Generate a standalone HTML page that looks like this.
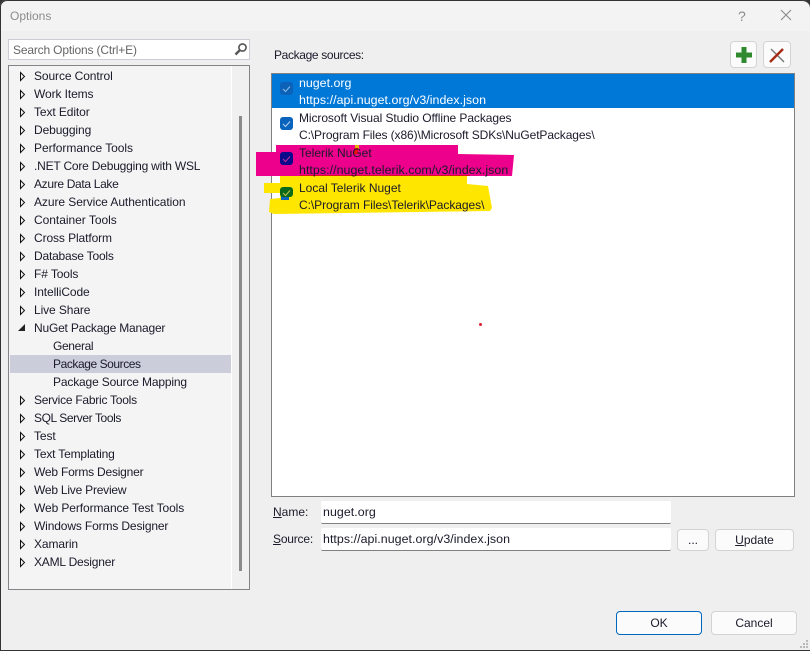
<!DOCTYPE html>
<html><head><meta charset="utf-8"><style>
html,body{margin:0;padding:0;width:810px;height:651px;overflow:hidden;background:#fff}
*{box-sizing:border-box}
#d{position:absolute;left:0;top:0;width:810px;height:651px;background:#efefef;font:12px "Liberation Sans",sans-serif;color:#1a1a2a;overflow:hidden}
.a{position:absolute;white-space:nowrap}
.r{position:absolute;left:34px;height:18px;line-height:18px;white-space:nowrap;letter-spacing:-.1px}
.b{position:absolute;background:#fbfbfb;border:1px solid #d3d3d3;border-radius:4px;text-align:center}
.in{position:absolute;background:#fff;border-bottom:1px solid #808080;border-radius:2px;padding-left:2px;height:23px;line-height:22px;font-size:12.4px;letter-spacing:.05px}
.c{position:absolute;left:280px;width:13px;height:13px;border-radius:3px;background:#0a63bd}
.l{position:absolute;left:299px;white-space:nowrap;height:17px;line-height:17px}
u{text-underline-offset:1px}
</style></head><body><div id="d">
<div class="a" style="left:0;top:0;width:810px;height:31px;background:#f3f3f3"></div>
<div class="a" style="left:10px;top:8px;color:#8c8c8c;line-height:16px">Options</div>
<div class="a" style="left:738px;top:8px;color:#8c8c8c;font-size:14px;line-height:16px">?</div>
<svg class="a" style="left:780px;top:9px" width="12" height="12"><path d="M1 1L11 11M11 1L1 11" stroke="#8a8a8a" stroke-width="1.1"/></svg>

<div class="a" style="left:8px;top:39px;width:242px;height:21px;background:#fff;border:1px solid #ccccd8"></div>
<div class="a" style="left:13px;top:42px;color:#666;line-height:17px;letter-spacing:-.17px">Search Options (Ctrl+E)</div>
<svg class="a" style="left:234px;top:42px" width="14" height="14"><circle cx="8.5" cy="5.5" r="3.6" fill="none" stroke="#555" stroke-width="1.6"/><path d="M5.8 8.2L1.5 12.5" stroke="#555" stroke-width="2.4"/></svg>

<div class="a" style="left:8px;top:65px;width:242px;height:525px;background:#f4f4f4;border:1px solid #848488"></div>
<div class="a" style="left:231px;top:66px;width:1px;height:523px;background:#fff"></div>
<div class="a" style="left:232px;top:66px;width:17px;height:523px;background:#f0f0f0"></div>
<div class="a" style="left:239px;top:116px;width:3px;height:455px;background:#8a8a8a"></div>
<div class="a" style="left:10px;top:355px;width:221px;height:18px;background:#cbcddb"></div>

<svg class="a" style="left:0;top:0" width="40" height="580" fill="#f4f4f4" stroke="#111" stroke-width="1">
<path d="M20.5 72.5v8l4-4zM20.5 90.5v8l4-4zM20.5 108.5v8l4-4zM20.5 126.5v8l4-4zM20.5 144.5v8l4-4zM20.5 162.5v8l4-4zM20.5 180.5v8l4-4zM20.5 198.5v8l4-4zM20.5 216.5v8l4-4zM20.5 234.5v8l4-4zM20.5 252.5v8l4-4zM20.5 270.5v8l4-4zM20.5 288.5v8l4-4zM20.5 306.5v8l4-4zM20.5 396.5v8l4-4zM20.5 414.5v8l4-4zM20.5 432.5v8l4-4zM20.5 450.5v8l4-4zM20.5 468.5v8l4-4zM20.5 486.5v8l4-4zM20.5 504.5v8l4-4zM20.5 522.5v8l4-4zM20.5 540.5v8l4-4zM20.5 558.5v8l4-4z"/>
<path d="M25 324v7h-7z" fill="#222" stroke="none"/>
</svg>
<div class="r" style="top:67px">Source Control</div>
<div class="r" style="top:85px">Work Items</div>
<div class="r" style="top:103px">Text Editor</div>
<div class="r" style="top:121px">Debugging</div>
<div class="r" style="top:139px;letter-spacing:-.05px">Performance Tools</div>
<div class="r" style="top:157px;letter-spacing:-.2px">.NET Core Debugging with WSL</div>
<div class="r" style="top:175px;letter-spacing:-.33px">Azure Data Lake</div>
<div class="r" style="top:193px;letter-spacing:-.07px">Azure Service Authentication</div>
<div class="r" style="top:211px;letter-spacing:-.03px">Container Tools</div>
<div class="r" style="top:229px">Cross Platform</div>
<div class="r" style="top:247px;letter-spacing:-.2px">Database Tools</div>
<div class="r" style="top:265px">F# Tools</div>
<div class="r" style="top:283px">IntelliCode</div>
<div class="r" style="top:301px">Live Share</div>
<div class="r" style="top:319px;letter-spacing:-.2px">NuGet Package Manager</div>
<div class="r" style="top:337px;left:53px;letter-spacing:-.35px">General</div>
<div class="r" style="top:355px;left:53px;letter-spacing:-.43px">Package Sources</div>
<div class="r" style="top:373px;left:53px;letter-spacing:-.16px">Package Source Mapping</div>
<div class="r" style="top:391px;letter-spacing:-.25px">Service Fabric Tools</div>
<div class="r" style="top:409px;letter-spacing:-.4px">SQL Server Tools</div>
<div class="r" style="top:427px">Test</div>
<div class="r" style="top:445px;letter-spacing:-.17px">Text Templating</div>
<div class="r" style="top:463px;letter-spacing:-.21px">Web Forms Designer</div>
<div class="r" style="top:481px;letter-spacing:-.22px">Web Live Preview</div>
<div class="r" style="top:499px">Web Performance Test Tools</div>
<div class="r" style="top:517px;letter-spacing:-.14px">Windows Forms Designer</div>
<div class="r" style="top:535px">Xamarin</div>
<div class="r" style="top:553px;letter-spacing:-.2px">XAML Designer</div>

<div class="a" style="left:274px;top:47px;line-height:17px;letter-spacing:-.35px">Package sources:</div>
<div class="b" style="left:730px;top:41px;width:27px;height:27px"></div>
<svg class="a" style="left:735px;top:46px" width="18" height="18"><path d="M9 1v16M1 9h16" stroke="#2f8a2f" stroke-width="5"/></svg>
<div class="b" style="left:763px;top:41px;width:28px;height:27px"></div>
<svg class="a" style="left:768px;top:46px" width="18" height="18"><path d="M3 3L16 16" stroke="#777" stroke-width="1.4"/><path d="M15 3L2 16" stroke="#a52a14" stroke-width="2.4"/></svg>

<div class="a" style="left:271px;top:73px;width:524px;height:424px;background:#fff;border:1px solid #808080"></div>
<div class="a" style="left:272px;top:74px;width:522px;height:34px;background:#0078d7"></div>
<svg class="a" style="left:0;top:0" width="810" height="230">
<path d="M276 145L458 145L458 154L514 155L512 176L470 176L256 176L256 152L276 152Z" fill="#ed008c"/>
<path d="M280 176L467 176L467 184L488 186L492 208L490 211L274 214L269 212L270 199L280 198L280 193L264 193L264 183L280 183Z" fill="#ffe600"/>
<rect x="355" y="145" width="4" height="4" fill="#e8b000"/>
<rect x="354" y="148" width="4" height="6" fill="#e81010"/>
<rect x="300" y="175" width="170" height="1" fill="#d81020"/>
</svg>
<div class="c" style="top:82px;background:#0b62b8"></div>
<div class="c" style="top:117px"></div>
<div class="c" style="top:152px;background:#0a0a8a"></div>
<div class="a" style="left:281px;top:194px;width:8px;height:6px;background:#0a63bd"></div>
<div class="c" style="top:187px;height:10px;background:#0a6a1a"></div>
<svg class="a" style="left:0;top:0" width="810" height="230" fill="none" stroke-width="1">
<path d="M283 89l2.5 2.5 4.5-5" stroke="#8cbce8"/>
<path d="M283 124l2.5 2.5 4.5-5" stroke="#b8d4f0"/>
<path d="M283 159l2.5 2.5 4.5-5" stroke="#c0309a"/>
<path d="M283 193l2.5 2.5 4.5-5" stroke="#c8c050"/>
</svg>
<div class="l" style="top:75px;color:#fff;font-size:12.4px">nuget.org</div>
<div class="l" style="top:92px;color:#fff;font-size:12.4px;letter-spacing:.05px">https://api.nuget.org/v3/index.json</div>
<div class="l" style="top:110px;letter-spacing:-.08px">Microsoft Visual Studio Offline Packages</div>
<div class="l" style="top:127px;letter-spacing:-.1px">C:\Program Files (x86)\Microsoft SDKs\NuGetPackages\</div>
<div class="l" style="top:145px">Telerik NuGet</div>
<div class="l" style="top:162px;font-size:12.4px;letter-spacing:.05px">https://nuget.telerik.com/v3/index.json</div>
<div class="l" style="top:180px">Local Telerik Nuget</div>
<div class="l" style="top:197px;letter-spacing:-.06px">C:\Program Files\Telerik\Packages\</div>
<div class="a" style="left:479px;top:323px;width:3px;height:3px;border-radius:2px;background:#e02030"></div>

<div class="a" style="left:273px;top:504px;line-height:17px"><u>N</u>ame:</div>
<div class="a" style="left:273px;top:531px;line-height:17px;letter-spacing:-.2px"><u>S</u>ource:</div>
<div class="in" style="left:321px;top:501px;width:350px">nuget.org</div>
<div class="in" style="left:321px;top:528px;width:350px">https://api.nuget.org/v3/index.json</div>
<div class="b" style="left:677px;top:529px;width:32px;height:22px;line-height:20px">...</div>
<div class="b" style="left:715px;top:529px;width:79px;height:22px;line-height:20px"><u>U</u>pdate</div>
<div class="b" style="left:616px;top:611px;width:86px;height:24px;line-height:22px;border:1.5px solid #0067c0">OK</div>
<div class="b" style="left:711px;top:611px;width:86px;height:24px;line-height:22px">Cancel</div>
<svg class="a" style="left:798px;top:639px" width="12" height="11" fill="#bbb"><rect x="8" y="1" width="2" height="2"/><rect x="5" y="4" width="2" height="2"/><rect x="8" y="4" width="2" height="2"/><rect x="2" y="7" width="2" height="2"/><rect x="5" y="7" width="2" height="2"/><rect x="8" y="7" width="2" height="2"/></svg>
<div class="a" style="left:0;top:0;width:810px;height:651px;border:1px solid #333;border-right:0;border-radius:7px 8px 0 0;box-shadow:0 0 0 20px #333;pointer-events:none"></div>
</div></body></html>
